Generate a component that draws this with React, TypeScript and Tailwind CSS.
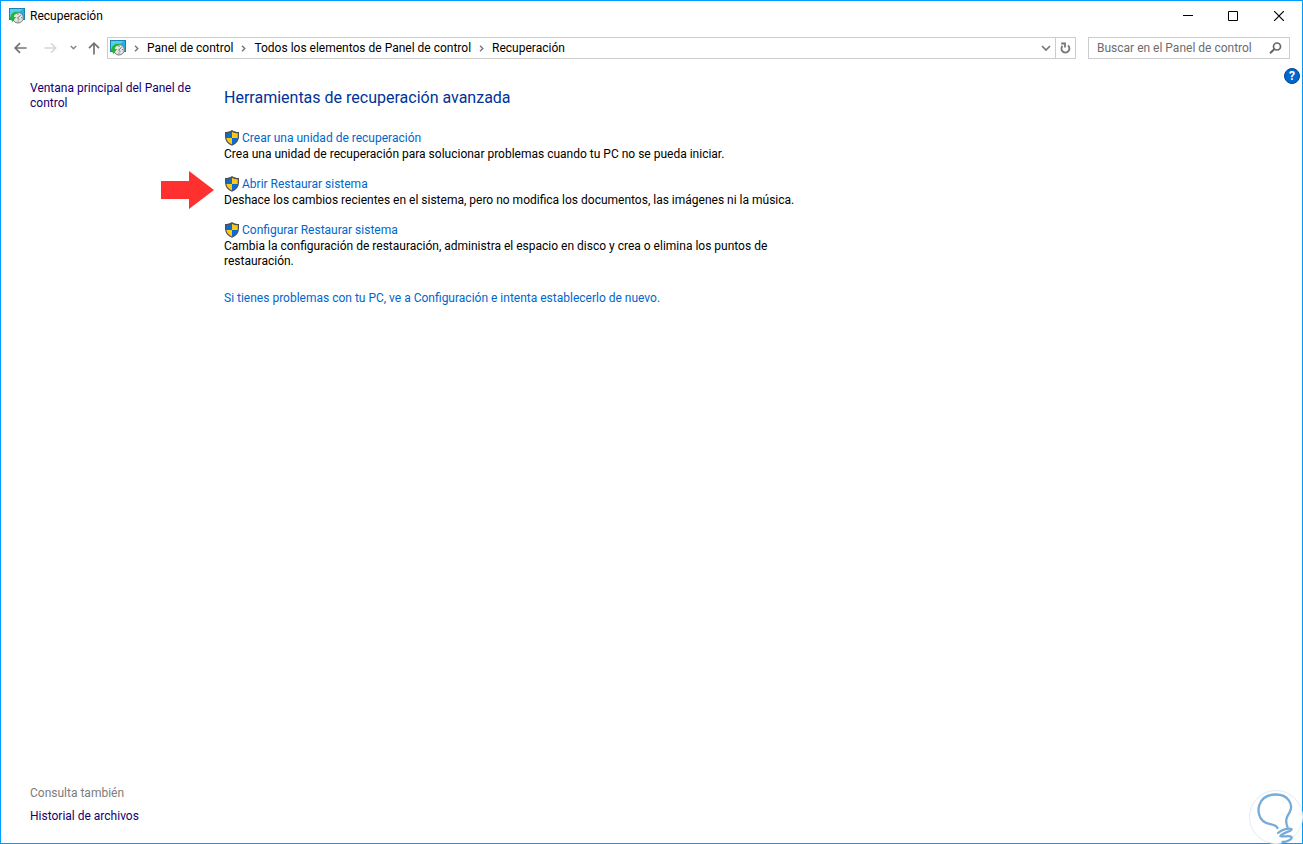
import { useState } from 'react'

const tools = [
  {
    title: 'Crear una unidad de recuperación',
    description: 'Crea una unidad de recuperación para solucionar problemas cuando tu PC no se pueda iniciar.',
  },
  {
    title: 'Abrir Restaurar sistema',
    description: 'Deshace los cambios recientes en el sistema, pero no modifica los documentos, las imágenes ni la música.',
    highlighted: true,
  },
  {
    title: 'Configurar Restaurar sistema',
    description: 'Cambia la configuración de restauración, administra el espacio en disco y crea o elimina los puntos de restauración.',
  },
]

const crumbs = ['Panel de control', 'Todos los elementos de Panel de control', 'Recuperación']

function RecoveryIcon() {
  return (
    <svg width="16" height="16" viewBox="0 0 16 16" className="shrink-0" aria-hidden="true">
      <rect x="0.5" y="0.5" width="15" height="11" fill="#22aee6" stroke="#1583b5" />
      <path d="M1 1h13L6 7l-5 3z" fill="#5ccbf2" />
      <circle cx="9" cy="9.700" r="5.300" fill="#e4e6e4" stroke="#767c78" />
      <path d="M9 5.700v1.200M9 12.500v1.200M12 9.700h1.200M8.500 10.200l3-3M8.500 10.200l2 1.500" stroke="#69716b" fill="none" />
      <path d="M9.500 4C5 3.300 2 5.500 1.600 9H0l3.700 5L7 9H4.700C5 7 7 5.300 9.500 5.600z" fill="#22b53a" />
    </svg>
  )
}

function ShieldIcon() {
  return (
    <svg width="16" height="16" viewBox="0 0 16 16" className="shrink-0 self-start" aria-hidden="true">
      <path d="M8 0C6 1.500 3.500 2 1 2v4.500C1 11 4 14 8 15.800 12 14 15 11 15 6.500V2C12.500 2 10 1.500 8 0z" fill="#4a5054" />
      <path d="M8 1.700C6.200 2.700 4.400 3.200 2.300 3.300V8H8z" fill="#0c6cd4" />
      <path d="M8 1.700c1.800 1 3.600 1.500 5.700 1.600V8H8z" fill="#ffcb12" />
      <path d="M2.300 8H8v6.400C4.800 12.900 2.700 10.800 2.300 8z" fill="#ffcb12" />
      <path d="M13.700 8H8v6.400c3.200-1.500 5.300-3.600 5.700-6.400z" fill="#0c6cd4" />
    </svg>
  )
}

function TitleBar() {
  return (
    <header className="flex h-[30px] items-center pl-2">
      <RecoveryIcon />
      <h1 className="ml-[5px] flex-1 text-black">Recuperación</h1>
      <button type="button" aria-label="Minimizar" className="flex h-full w-[45px] items-center justify-center">
        <svg width="10" height="10" viewBox="0 0 10 10"><path d="M0 4.500h10" stroke="#000" /></svg>
      </button>
      <button type="button" aria-label="Maximizar" className="flex h-full w-[45px] items-center justify-center">
        <svg width="10" height="10" viewBox="0 0 10 10"><path d="M0.500 0.500h9v9h-9z" stroke="#000" fill="none" /></svg>
      </button>
      <button type="button" aria-label="Cerrar" className="flex h-full w-[47px] items-center justify-center">
        <svg width="10" height="10" viewBox="0 0 10 10"><path d="M0 0l10 10M10 0L0 10" stroke="#000" strokeWidth="1.200" /></svg>
      </button>
    </header>
  )
}

function NavBar() {
  const [query, setQuery] = useState('')

  return (
    <nav className="mt-[6px] flex h-[22px] items-center pr-3 pl-[13px]">
      <button type="button" aria-label="Atrás">
        <svg width="13" height="12" viewBox="0 0 13 12" fill="none" stroke="#737373" strokeWidth="1.700"><path d="M12.500 6H1.500M6 1.200L1.200 6 6 10.800" /></svg>
      </button>
      <button type="button" aria-label="Adelante" className="ml-[17px]">
        <svg width="13" height="12" viewBox="0 0 13 12" fill="none" stroke="#d6d6d6" strokeWidth="1.500"><path d="M0.500 6h11M7 1.200L11.800 6 7 10.800" /></svg>
      </button>
      <button type="button" aria-label="Ubicaciones recientes" className="ml-[13px]">
        <svg width="7" height="6" viewBox="0 0 7 6" fill="none" stroke="#858585" strokeWidth="1.500"><path d="M0.800 1l2.700 2.700L6.200 1" /></svg>
      </button>
      <button type="button" aria-label="Subir" className="ml-[11px]">
        <svg width="12" height="13" viewBox="0 0 12 13" fill="none" stroke="#737373" strokeWidth="1.700"><path d="M6 12.500v-11M1 6.200l5-5 5 5" /></svg>
      </button>

      <div className="ml-[7px] flex h-full min-w-0 flex-1 items-center border border-[#cccccc] pl-[2px]">
        <RecoveryIcon />
        <ol className="flex flex-1 items-center">
          {crumbs.map(c => (
            <li key={c} className="flex items-center">
              <svg width="5" height="7" viewBox="0 0 5 7" className="mx-2 shrink-0" fill="none" stroke="#777" strokeWidth="1.400" aria-hidden="true"><path d="M1 0.700l2.800 2.800L1 6.300" /></svg>
              <a href="#" className="text-black">{c}</a>
            </li>
          ))}
        </ol>
        <button type="button" aria-label="Ubicaciones anteriores" className="flex h-full w-[19px] items-center justify-center">
          <svg width="10" height="7" viewBox="0 0 10 7" fill="none" stroke="#777" strokeWidth="1.700"><path d="M1 1l4 4 4-4" /></svg>
        </button>
        <button type="button" aria-label="Actualizar" className="flex h-full w-5 items-center justify-center border-l border-[#cccccc]">
          <svg width="11" height="12" viewBox="0 0 11 12" fill="none" stroke="#777" strokeWidth="1.800"><path d="M8 3.500A4 4 0 1 1 2.500 3.800M1.200 1.500H5v4" /></svg>
        </button>
      </div>

      <div className="ml-3 flex h-full w-[202px] items-center border border-[#cccccc] pr-[7px] pl-2">
        <input
          type="text"
          aria-label="Buscar en el Panel de control"
          value={query}
          onChange={e => setQuery(e.target.value)}
          placeholder="Buscar en el Panel de control"
          className="min-w-0 flex-1 placeholder-[#6d6d6d] outline-none"
        />
        <button type="button" aria-label="Buscar">
          <svg width="13" height="12" viewBox="0 0 13 12" fill="none" stroke="#666"><circle cx="8" cy="4.500" r="3.500" strokeWidth="1.700" /><path d="M5.500 7L1 11.200" strokeWidth="2" /></svg>
        </button>
      </div>
    </nav>
  )
}

export default function App() {
  return (
    <div className="relative flex min-h-screen flex-col border border-[#009cff] bg-white font-[Roboto,sans-serif] text-[12px] leading-[15px] text-black">
      <TitleBar />
      <NavBar />

      <div className="flex flex-1 pl-[29px]">
        <aside className="flex w-[194px] shrink-0 flex-col pt-[22px] pr-5 pb-[19px] text-[#150070]">
          <a href="#">Ventana principal del Panel de control</a>
          <div className="mt-auto flex flex-col gap-2">
            <h2 className="text-[#7c7c7c]">Consulta también</h2>
            <a href="#">Historial de archivos</a>
          </div>
        </aside>

        <main className="flex-1 pt-[29px]">
          <h2 className="text-[16px] leading-5 text-[#003399]">Herramientas de recuperación avanzada</h2>
          <ul className="mt-[22px] flex max-w-[575px] flex-col gap-[14px]">
            {tools.map(t => (
              <li key={t.title} className="relative">
                {t.highlighted && (
                  <svg width="53" height="38" viewBox="0 0 53 38" className="absolute -top-[5px] right-full mr-[10px]" aria-hidden="true">
                    <path d="M0 10h28V0l25 19-25 19V28H0z" fill="#ff3030" />
                  </svg>
                )}
                <a href="#" className="flex h-[17px] items-center gap-[2px] text-[#0066cc]">
                  <ShieldIcon />
                  {t.title}
                </a>
                <p>{t.description}</p>
              </li>
            ))}
          </ul>
          <a href="#" className="mt-[22px] inline-block text-[#0066cc]">
            Si tienes problemas con tu PC, ve a Configuración e intenta establecerlo de nuevo.
          </a>
        </main>

        <button type="button" aria-label="Ayuda" className="mt-[9px] mr-[2px] flex size-4 items-center justify-center rounded-full border border-[#00458f] bg-[#0067ce] font-bold text-white">
          ?
        </button>
      </div>

      <svg width="54" height="54" viewBox="0 0 54 54" className="absolute -right-px -bottom-px" fill="none" aria-hidden="true">
        <circle cx="27" cy="27" r="26.500" fill="#fff" stroke="#e5eaf5" />
        <path d="M28.500 38C26 33 20 36 14 31 6 24 8 5 26 4.500c13-0.500 19 10 14.500 18-4 6-4 9-2 14.500" stroke="#77acd8" strokeWidth="2.300" strokeLinecap="round" />
        <path d="M29 43c4-4 11-5 13.500-4 1.500 1.500-10 4.500-11 7 2 1.500 9-1 11 1 1 2-4 5-9 5" stroke="#77acd8" strokeWidth="2.300" strokeLinecap="round" />
      </svg>
    </div>
  )
}
